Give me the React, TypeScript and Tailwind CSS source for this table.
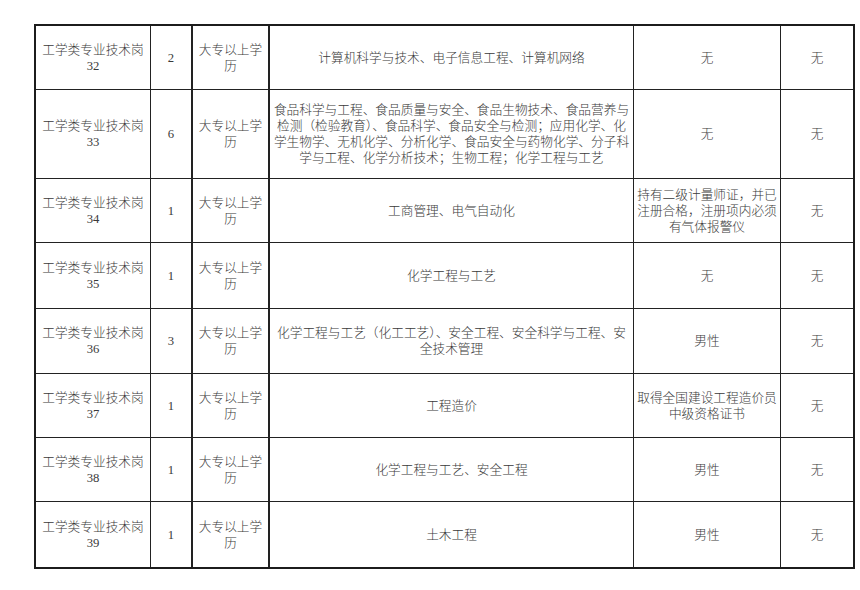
import React from "react";

type Row = {
  h: string;
  id: string;
  n: string;
  major: React.ReactNode;
  cond: React.ReactNode;
};

const rows: Row[] = [
  { h: "h-[64px]", id: "32", n: "2", major: "计算机科学与技术、电子信息工程、计算机网络", cond: "无" },
  {
    h: "h-[89px]",
    id: "33",
    n: "6",
    major: (
      <>
        食品科学与工程、食品质量与安全、食品生物技术、食品营养与
        <br />
        检测（检验教育）、食品科学、食品安全与检测；应用化学、化
        <br />
        学生物学、无机化学、分析化学、食品安全与药物化学、分子科
        <br />
        学与工程、化学分析技术；生物工程；化学工程与工艺
      </>
    ),
    cond: "无",
  },
  {
    h: "h-[64px]",
    id: "34",
    n: "1",
    major: "工商管理、电气自动化",
    cond: (
      <>
        持有二级计量师证，并已
        <br />
        注册合格，注册项内必须
        <br />
        有气体报警仪
      </>
    ),
  },
  { h: "h-[66px]", id: "35", n: "1", major: "化学工程与工艺", cond: "无" },
  {
    h: "h-[65px]",
    id: "36",
    n: "3",
    major: (
      <>
        化学工程与工艺（化工工艺）、安全工程、安全科学与工程、安
        <br />
        全技术管理
      </>
    ),
    cond: "男性",
  },
  {
    h: "h-[64px]",
    id: "37",
    n: "1",
    major: "工程造价",
    cond: (
      <>
        取得全国建设工程造价员
        <br />
        中级资格证书
      </>
    ),
  },
  { h: "h-[64px]", id: "38", n: "1", major: "化学工程与工艺、安全工程", cond: "男性" },
  { h: "h-[65px]", id: "39", n: "1", major: "土木工程", cond: "男性" },
];

export default function App() {
  return (
    <div
      className="w-[860px] h-[590px] bg-white pt-[24px] pl-[34px] text-[#3a3a3a] text-[12.7px] leading-[16px]"
      style={{ fontFamily: '"Liberation Serif", "Noto Sans CJK SC", serif' }}
    >
      <div className="w-[821px] border-2 border-[#1c1c1c] flex flex-col font-light">
        {rows.map((r, i) => {
          const last = i === rows.length - 1;
          const bb = last ? "" : "border-b border-[#222]";
          return (
            <div key={r.id} className={`flex ${r.h} ${bb}`}>
              <div className="w-[115px] shrink-0 border-r border-[#222] flex items-center justify-center text-center">
                <div>
                  工学类专业技术岗
                  <br />
                  {r.id}
                </div>
              </div>
              <div className="w-[42px] shrink-0 border-r-2 border-[#222] flex items-center justify-center">
                {r.n}
              </div>
              <div className="w-[77px] shrink-0 border-r-2 border-[#222] flex items-center justify-center text-center">
                <div>
                  大专以上学
                  <br />
                  历
                </div>
              </div>
              <div className="w-[364px] shrink-0 border-r border-[#222] flex items-center justify-center text-center whitespace-nowrap">
                <div>{r.major}</div>
              </div>
              <div className="w-[147px] shrink-0 border-r border-[#222] flex items-center justify-center text-center whitespace-nowrap">
                <div>{r.cond}</div>
              </div>
              <div className="flex-1 flex items-center justify-center">无</div>
            </div>
          );
        })}
      </div>
    </div>
  );
}
